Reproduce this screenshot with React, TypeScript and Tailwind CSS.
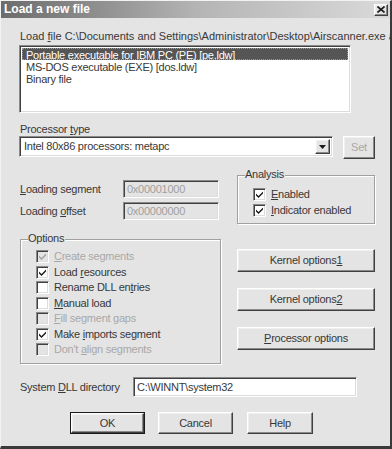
import React from 'react';

const raised =
  'border border-t-white border-l-white border-b-[#404040] border-r-[#404040] shadow-[inset_-1px_-1px_0_#8a8a8a,inset_1px_1px_0_#f0f0f0] bg-[#e4e4e4]';
const sunken =
  'border border-t-[#8a8a8a] border-l-[#8a8a8a] border-b-white border-r-white shadow-[inset_1px_1px_0_#404040,inset_-1px_-1px_0_#dcdcdc]';

const Check = ({ color }: { color: string }) => (
  <svg width="9" height="9" viewBox="0 0 9 9">
    <path d="M1 3.5 L3.5 6 L8 1.5 L8 3.5 L3.5 8 L1 5.5 Z" fill={color} />
  </svg>
);

const CheckBox = ({
  checked,
  disabled,
  children,
}: {
  checked?: boolean;
  disabled?: boolean;
  children: React.ReactNode;
}) => (
  <div className="flex items-center h-[15.5px]">
    <span
      className={`${sunken} w-[13px] h-[13px] flex items-center justify-center ${
        disabled ? 'bg-[#e4e4e4]' : 'bg-white'
      }`}
    >
      {checked && <Check color={disabled ? '#a0a0a0' : '#1a1a1a'} />}
    </span>
    <span className={`ml-[5px] ${disabled ? 'text-[#a8a8a8]' : ''}`}>{children}</span>
  </div>
);

const GroupBox = ({
  label,
  className,
  children,
}: {
  label: string;
  className: string;
  children: React.ReactNode;
}) => (
  <div
    className={`relative border border-[#a0a0a0] shadow-[1px_1px_0_#ffffff,inset_1px_1px_0_#ffffff] ${className}`}
  >
    <span className="absolute -top-[8px] left-[7px] bg-[#e4e4e4] pr-[1px] leading-[13px]">{label}</span>
    {children}
  </div>
);

const Button = ({
  children,
  className,
  disabled,
}: {
  children: React.ReactNode;
  className: string;
  disabled?: boolean;
}) => (
  <div
    className={`${raised} flex items-center justify-center ${disabled ? 'text-[#a8a8a8]' : ''} ${className}`}
  >
    {children}
  </div>
);

export default function App() {
  return (
    <div className="w-[392px] h-[449px] bg-[#e4e4e4] border-l border-t border-[#f2f2f2] border-r-2 border-b-[3px] border-r-[#3a3a3a] border-b-[#3a3a3a] font-['Liberation_Sans',Arial,sans-serif] text-[11px] tracking-[-0.25px] text-[#383838] leading-[13px] overflow-hidden">
      {/* title bar */}
      <div className="h-[17px] bg-gradient-to-r from-[#6c6c6c] via-[#b4b4b4] to-[#dadada] flex items-center justify-between pl-[3px] pr-[2px]">
        <span className="text-white font-bold text-[12px] tracking-normal">Load a new file</span>
        <span className={`${raised} w-[14px] h-[12px] flex items-center justify-center`}>
          <svg width="8" height="7" viewBox="0 0 8 7">
            <path d="M0.5 0.5 L7.5 6.5 M7.5 0.5 L0.5 6.5" stroke="#1a1a1a" strokeWidth="1.6" />
          </svg>
        </span>
      </div>

      <div className="pl-[18px] pr-[15px]">
        <div className="pt-[12px] whitespace-nowrap pl-[1px] tracking-normal">
          Load <u>f</u>ile C:\Documents and Settings\Administrator\Desktop\Airscanner.exe as
        </div>

        {/* format list */}
        <div className={`${sunken} bg-white mt-[2px] w-[332px] h-[68px] p-[2px]`}>
          <div className="bg-[#555555] text-white h-[12px] leading-[12px] pl-[3px] border border-dotted border-[#999]">
            Portable executable for IBM PC (PE) [pe.ldw]
          </div>
          <div className="h-[12px] leading-[12px] pl-[4px] mt-[1px]">MS-DOS executable (EXE) [dos.ldw]</div>
          <div className="h-[12px] leading-[12px] pl-[4px]">Binary file</div>
        </div>

        <div className="mt-[10px] pl-[1px]">
          Processor <u>t</u>ype
        </div>
        <div className="flex items-start">
          <div className={`${sunken} bg-white w-[314px] h-[21px] flex items-center justify-between pl-[4px] pr-[2px]`}>
            <span>Intel 80x86 processors: metapc</span>
            <span className={`${raised} w-[15px] h-[15px] flex items-center justify-center`}>
              <svg width="7" height="4" viewBox="0 0 7 4">
                <path d="M0 0 H7 L3.5 4 Z" fill="#1a1a1a" />
              </svg>
            </span>
          </div>
          <Button className="ml-[10px] w-[32px] h-[23px]" disabled>
            Set
          </Button>
        </div>

        {/* loading + analysis */}
        <div className="flex items-start mt-[16px]">
          <div className="w-[218px] pt-[5px] flex flex-col gap-[4px]">
            <div className="flex items-center">
              <span className="w-[104px] pl-[1px]">
                <u>L</u>oading segment
              </span>
              <span className={`${sunken} w-[96px] h-[18px] flex items-center pl-[3px] text-[#a0a0a0]`}>
                0x00001000
              </span>
            </div>
            <div className="flex items-center">
              <span className="w-[104px] pl-[1px]">
                Loading <u>o</u>ffset
              </span>
              <span className={`${sunken} w-[96px] h-[18px] flex items-center pl-[3px] text-[#a0a0a0]`}>
                0x00000000
              </span>
            </div>
          </div>
          <GroupBox label="Analysis" className="w-[138px] h-[49px] pl-[15px] pt-[11px]">
            <CheckBox checked>
              <u>E</u>nabled
            </CheckBox>
            <CheckBox checked>
              <u>I</u>ndicator enabled
            </CheckBox>
          </GroupBox>
        </div>

        {/* options + kernel buttons */}
        <div className="flex items-start mt-[15px]">
          <GroupBox label="Options" className="ml-[1px] w-[201px] h-[125px] pl-[15px] pt-[9px]">
            <CheckBox checked disabled>
              <u>C</u>reate segments
            </CheckBox>
            <CheckBox checked>
              Load <u>r</u>esources
            </CheckBox>
            <CheckBox>
              Rename DLL en<u>t</u>ries
            </CheckBox>
            <CheckBox>
              <u>M</u>anual load
            </CheckBox>
            <CheckBox disabled>
              <u>F</u>ill segment gaps
            </CheckBox>
            <CheckBox checked>
              Make <u>i</u>mports segment
            </CheckBox>
            <CheckBox disabled>
              Don't <u>a</u>lign segments
            </CheckBox>
          </GroupBox>
          <div className="ml-[16px] pt-[10px] flex flex-col gap-[16px]">
            <Button className="w-[138px] h-[23px]">
              Kernel options<u>1</u>
            </Button>
            <Button className="w-[138px] h-[23px]">
              Kernel options<u>2</u>
            </Button>
            <Button className="w-[138px] h-[23px]">
              <u>P</u>rocessor options
            </Button>
          </div>
        </div>

        {/* system dll */}
        <div className="flex items-center mt-[13px]">
          <span className="w-[114px] pl-[1px]">
            System <u>D</u>LL directory
          </span>
          <span className={`${sunken} bg-white w-[224px] h-[20px] flex items-center pl-[3px]`}>
            C:\WINNT\system32
          </span>
        </div>

        {/* bottom buttons */}
        <div className="flex items-start mt-[15px] pl-[51px]">
          <div className="border border-[#1a1a1a]">
            <Button className="w-[73px] h-[20px]">OK</Button>
          </div>
          <Button className="ml-[13px] w-[75px] h-[22px]">Cancel</Button>
          <Button className="ml-[14px] w-[66px] h-[22px]">Help</Button>
        </div>
      </div>
    </div>
  );
}
